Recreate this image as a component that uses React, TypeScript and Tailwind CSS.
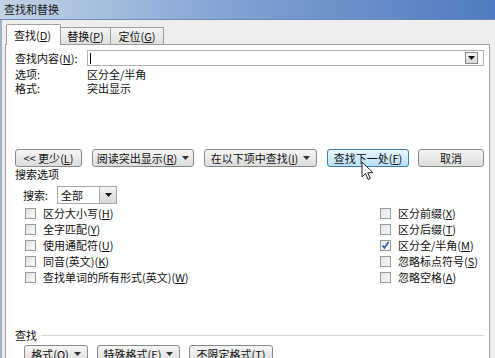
import React from 'react';

const Acc = ({ c }: { c: string }) => (
  <span>
    (<span className="underline underline-offset-1">{c}</span>)
  </span>
);

const Caret = () => (
  <svg width="7" height="4" viewBox="0 0 7 4" className="ml-[5px]">
    <path d="M0 0h7L3.5 4z" fill="#333" />
  </svg>
);

interface BtnProps {
  children: React.ReactNode;
  w: number;
  hot?: boolean;
  className?: string;
}

const Btn: React.FC<BtnProps> = ({ children, w, hot, className }) => (
  <div
    style={{ width: w }}
    className={`h-[18px] flex items-center justify-center rounded-[3px] border text-[11px] leading-none text-[#111] ${
      hot
        ? 'border-[#3c7fb1] bg-gradient-to-b from-[#eaf6fd] to-[#b7e0f8]'
        : 'border-[#8a8a8a] bg-gradient-to-b from-[#f6f6f6] to-[#dcdcdc]'
    } ${className ?? ''}`}
  >
    {children}
  </div>
);

const Check = ({ label, acc, checked }: { label: string; acc: string; checked?: boolean }) => (
  <div className="h-[16px] flex items-center">
    <div className="w-[11px] h-[11px] border border-[#9a9a9a] bg-gradient-to-br from-[#e6e6e6] to-[#f8f8f8] flex items-center justify-center">
      {checked && (
        <svg width="9" height="9" viewBox="0 0 9 9">
          <path d="M1.5 4.5l2 2.5 4-6" stroke="#2a52a8" strokeWidth="1.6" fill="none" />
        </svg>
      )}
    </div>
    <span className="ml-[7px] text-[11px] leading-none">
      {label}
      <Acc c={acc} />
    </span>
  </div>
);

const DropBtn = ({ className }: { className?: string }) => (
  <div
    className={`flex items-center justify-center border border-[#8a8a8a] bg-gradient-to-b from-[#f4f4f4] to-[#d8d8d8] ${className ?? ''}`}
  >
    <svg width="7" height="4" viewBox="0 0 7 4">
      <path d="M0 0h7L3.5 4z" fill="#111" />
    </svg>
  </div>
);

export default function App() {
  return (
    <div
      className="w-[495px] h-[358px] overflow-hidden flex flex-col bg-[#eeeeee] text-[#111] relative"
      style={{ fontFamily: '"Noto Sans CJK SC", "Liberation Sans", sans-serif' }}
    >
      {/* title bar */}
      <div className="h-[20px] shrink-0 flex items-center pl-[4px] bg-gradient-to-r from-[#c4d3e6] via-[#7d9fd2] to-[#4f7bc0] border-b border-[#6d8bb5]">
        <span className="text-[11px] leading-none text-[#1a1a1a]">查找和替换</span>
      </div>

      <div className="flex flex-1 min-h-0">
        <div className="w-[3px] bg-[#9fb2cc]" />
        <div className="flex-1 flex flex-col pl-[3px] pr-[5px] pt-[5px]">
          {/* tabs */}
          <div className="flex items-end h-[20px] relative z-10">
            <div className="w-[55px] h-[21px] bg-white border border-b-0 border-[#a0a0a0] rounded-t-[2px] flex items-center pl-[7px] text-[11px] leading-none ml-[1px]">
              查找<Acc c="D" />
            </div>
            <div className="w-[50px] h-[18px] border border-l-0 border-[#a0a0a0] bg-gradient-to-b from-[#f4f4f4] to-[#e0e0e0] flex items-center justify-center text-[11px] leading-none">
              替换<Acc c="P" />
            </div>
            <div className="w-[53px] h-[18px] border border-l-0 border-[#a0a0a0] bg-gradient-to-b from-[#f4f4f4] to-[#e0e0e0] flex items-center justify-center text-[11px] leading-none">
              定位<Acc c="G" />
            </div>
          </div>

          {/* panel */}
          <div className="flex-1 bg-white border border-[#a0a0a0] -mt-px pl-[9px] pr-[5px] pt-[5px] text-[11px] leading-none">
            <div className="h-[16px] flex items-center">
              <span className="w-[72px]">
                查找内容<Acc c="N" />:
              </span>
              <div className="flex-1 h-[16px] border border-[#b0b0b0] flex items-center justify-between pl-[2px] pr-[5px]">
                <div className="w-px h-[11px] bg-black" />
                <DropBtn className="w-[13px] h-[12px] border-[#6f6f6f]" />
              </div>
            </div>
            <div className="h-[14px] flex items-center mt-[1px]">
              <span className="w-[72px]">选项:</span>
              <span>区分全/半角</span>
            </div>
            <div className="h-[14px] flex items-center">
              <span className="w-[72px]">格式:</span>
              <span>突出显示</span>
            </div>

            {/* action buttons */}
            <div className="flex items-center mt-[54px] gap-[10px]">
              <Btn w={67}>
                {'<< 更少'}
                <Acc c="L" />
              </Btn>
              <Btn w={102}>
                阅读突出显示<Acc c="R" />
                <Caret />
              </Btn>
              <Btn w={113}>
                在以下项中查找<Acc c="I" />
                <Caret />
              </Btn>
              <Btn w={82} hot>
                查找下一处<Acc c="F" />
              </Btn>
              <Btn w={66} className="ml-[-1px]">
                取消
              </Btn>
            </div>

            <div className="h-[12px] flex items-center mt-[1px]">搜索选项</div>

            <div className="h-[18px] flex items-center mt-[6px] pl-[8px]">
              <span className="w-[34px]">搜索:</span>
              <div className="w-[60px] h-[18px] border border-[#a8a8a8] flex items-center justify-between pl-[3px]">
                <span>全部</span>
                <DropBtn className="w-[17px] h-[16px] border-0 border-l border-[#a8a8a8]" />
              </div>
            </div>

            <div className="grid grid-cols-[355px_1fr] pl-[10px] mt-px">
              <div className="flex flex-col">
                <Check label="区分大小写" acc="H" />
                <Check label="全字匹配" acc="Y" />
                <Check label="使用通配符" acc="U" />
                <Check label="同音(英文)" acc="K" />
                <Check label="查找单词的所有形式(英文)" acc="W" />
              </div>
              <div className="flex flex-col">
                <Check label="区分前缀" acc="X" />
                <Check label="区分后缀" acc="T" />
                <Check label="区分全/半角" acc="M" checked />
                <Check label="忽略标点符号" acc="S" />
                <Check label="忽略空格" acc="A" />
              </div>
            </div>

            <div className="h-[14px] flex items-center mt-[43px]">
              <span>查找</span>
              <div className="flex-1 h-px bg-[#d8d8d8] ml-[4px]" />
            </div>

            <div className="flex items-center mt-[3px] ml-[9px] gap-[9px]">
              <Btn w={64}>
                格式<Acc c="O" />
                <Caret />
              </Btn>
              <Btn w={83}>
                特殊格式<Acc c="E" />
                <Caret />
              </Btn>
              <Btn w={84}>
                不限定格式<Acc c="T" />
              </Btn>
            </div>
          </div>
        </div>
      </div>

      {/* mouse cursor */}
      <svg width="13" height="20" viewBox="0 0 13 20" className="absolute left-[361px] top-[161px]">
        <path d="M1 1v15l3.5-3.5 2.6 6 2.2-1-2.6-5.8H12z" fill="white" stroke="#222" strokeWidth="1" />
      </svg>
    </div>
  );
}
